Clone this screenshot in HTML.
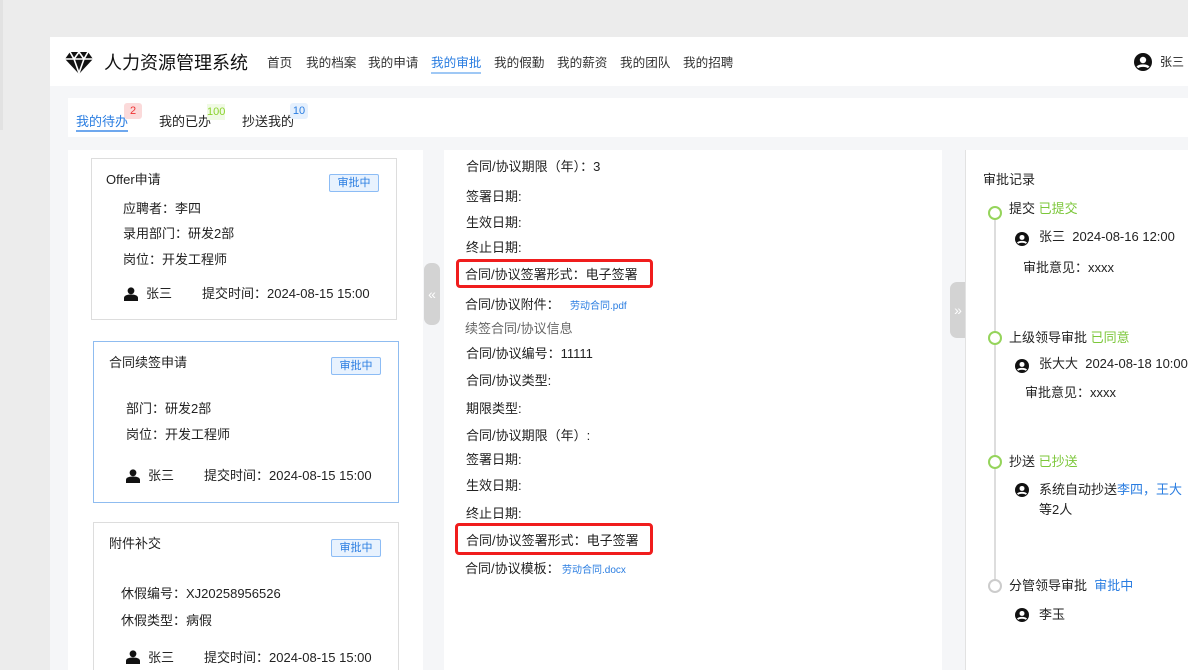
<!DOCTYPE html>
<html style="overflow:hidden;height:670px"><head><meta charset="utf-8"><style>
*{margin:0;padding:0;box-sizing:border-box}
body{width:1188px;height:670px;overflow:hidden;background:#ececec;font-family:"Liberation Sans","Noto Sans CJK SC",sans-serif;font-size:13px;line-height:16px;color:#222;position:relative}
.a{position:absolute;white-space:nowrap}
.hdr{left:50px;top:37px;width:1138px;height:49px;background:#fff}
.body{left:50px;top:86px;width:1138px;height:584px;background:#f5f6f8}
.nav{top:55px;font-size:12.6px;color:#333}
.panel{background:#fff}
.card{background:#fff;border:1px solid #ddd}
.tag{width:50px;height:18px;border:1px solid #8cbcf5;background:#e8f2fe;color:#2a7de1;font-size:11px;text-align:center;line-height:16px;border-radius:2px}
.blue{color:#2a7de1}
.green{color:#7cc73a}
.red{border:3px solid #f01d1d;border-radius:4px}
.handle{background:#d3d3d3;border-radius:7px;color:#fff;font-size:14px;text-align:center}
.dot{width:14px;height:14px;border:2px solid #95d45b;border-radius:50%;background:#fff}
</style></head><body>
<div class="a" style="left:0;top:0;width:3px;height:130px;background:#e2e2e2"></div>
<div class="a hdr"></div>
<div class="a body"></div>
<svg class="a" style="left:65px;top:52px" width="28" height="22" viewBox="0 0 28 22"><path d="M5 0h18l5 7-14 15L0 7z" fill="#111"/><path d="M0 7h28M9 7l5 14 5-14M5 0l4 7 5-7 5 7 4-7" stroke="#fff" stroke-width="1.6" fill="none"/></svg>
<div class="a" style="left:104px;top:52px;font-size:18px;line-height:22px;color:#111">人力资源管理系统</div>
<div class="a nav" style="left:267px">首页</div>
<div class="a nav" style="left:306px">我的档案</div>
<div class="a nav" style="left:368px">我的申请</div>
<div class="a nav blue" style="left:431px;border-bottom:2px solid #9fc8f5;padding-bottom:1px;color:#2a7de1">我的审批</div>
<div class="a nav" style="left:494px">我的假勤</div>
<div class="a nav" style="left:557px">我的薪资</div>
<div class="a nav" style="left:620px">我的团队</div>
<div class="a nav" style="left:683px">我的招聘</div>
<svg class="a" style="left:1134px;top:53px" width="18" height="18" viewBox="0 0 18 18"><circle cx="9" cy="9" r="9" fill="#111"/><circle cx="9" cy="7" r="3.2" fill="#fff"/><path d="M3.5 14.5c1.5-2.5 9.5-2.5 11 0" stroke="#fff" stroke-width="2.4" fill="none"/></svg>
<div class="a" style="left:1160px;top:54px;font-size:12px">张三</div>

<div class="a panel" style="left:68px;top:98px;width:1120px;height:39px"></div>
<div class="a blue" style="left:76px;top:114px;border-bottom:2px solid #6fa8ee;color:#2a7de1">我的待办</div>
<div class="a" style="left:124px;top:103px;width:18px;height:16px;background:#fbdada;color:#e33;font-size:11px;text-align:center;line-height:16px;border-radius:3px">2</div>
<div class="a" style="left:159px;top:114px">我的已办</div>
<div class="a" style="left:207px;top:104px;font-size:11px;color:#8bd22d;background:#f0fae4">100</div>
<div class="a" style="left:242px;top:114px">抄送我的</div>
<div class="a" style="left:290px;top:103px;width:18px;height:16px;background:#e5f0fd;color:#2a7de1;font-size:11px;text-align:center;line-height:16px;border-radius:3px">10</div>

<div class="a panel" style="left:68px;top:150px;width:355px;height:520px"></div>
<div class="a card" style="left:91px;top:158px;width:306px;height:162px"></div>
<div class="a" style="left:106px;top:172px">Offer申请</div>
<div class="a tag" style="left:329px;top:174px">审批中</div>
<div class="a" style="left:123px;top:201px">应聘者：李四</div>
<div class="a" style="left:123px;top:226px">录用部门：研发2部</div>
<div class="a" style="left:123px;top:252px">岗位：开发工程师</div>
<svg class="a" style="left:124px;top:287px" width="14" height="14" viewBox="0 0 14 14"><circle cx="7" cy="3.8" r="3.4" fill="#111"/><path d="M0 14v-3c0-2 2-3.5 7-3.5s7 1.5 7 3.5v3z" fill="#111"/></svg>
<div class="a" style="left:146px;top:286px">张三</div>
<div class="a" style="left:202px;top:286px">提交时间：2024-08-15 15:00</div>

<div class="a card" style="left:93px;top:341px;width:306px;height:162px;border-color:#8fbcf0"></div>
<div class="a" style="left:109px;top:355px">合同续签申请</div>
<div class="a tag" style="left:331px;top:357px">审批中</div>
<div class="a" style="left:126px;top:401px">部门：研发2部</div>
<div class="a" style="left:126px;top:427px">岗位：开发工程师</div>
<svg class="a" style="left:126px;top:469px" width="14" height="14" viewBox="0 0 14 14"><circle cx="7" cy="3.8" r="3.4" fill="#111"/><path d="M0 14v-3c0-2 2-3.5 7-3.5s7 1.5 7 3.5v3z" fill="#111"/></svg>
<div class="a" style="left:148px;top:468px">张三</div>
<div class="a" style="left:204px;top:468px">提交时间：2024-08-15 15:00</div>

<div class="a card" style="left:93px;top:522px;width:306px;height:160px"></div>
<div class="a" style="left:109px;top:536px">附件补交</div>
<div class="a tag" style="left:331px;top:539px">审批中</div>
<div class="a" style="left:121px;top:586px">休假编号：XJ20258956526</div>
<div class="a" style="left:121px;top:613px">休假类型：病假</div>
<svg class="a" style="left:126px;top:650px" width="14" height="14" viewBox="0 0 14 14"><circle cx="7" cy="3.8" r="3.4" fill="#111"/><path d="M0 14v-3c0-2 2-3.5 7-3.5s7 1.5 7 3.5v3z" fill="#111"/></svg>
<div class="a" style="left:148px;top:650px">张三</div>
<div class="a" style="left:204px;top:650px">提交时间：2024-08-15 15:00</div>

<div class="a handle" style="left:424px;top:263px;width:16px;height:62px;line-height:62px">«</div>

<div class="a panel" style="left:444px;top:150px;width:498px;height:520px"></div>
<div class="a" style="left:466px;top:159px">合同/协议期限（年）：3</div>
<div class="a" style="left:466px;top:189px">签署日期:</div>
<div class="a" style="left:466px;top:215px">生效日期:</div>
<div class="a" style="left:466px;top:240px">终止日期:</div>
<div class="a red" style="left:456px;top:259px;width:197px;height:29px"></div>
<div class="a" style="left:465px;top:267px">合同/协议签署形式：电子签署</div>
<div class="a" style="left:465px;top:297px">合同/协议附件：</div>
<div class="a blue" style="left:570px;top:299px;font-size:10px">劳动合同.pdf</div>
<div class="a" style="left:465px;top:321px;color:#666">续签合同/协议信息</div>
<div class="a" style="left:466px;top:346px">合同/协议编号：11111</div>
<div class="a" style="left:466px;top:373px">合同/协议类型:</div>
<div class="a" style="left:466px;top:401px">期限类型:</div>
<div class="a" style="left:466px;top:428px">合同/协议期限（年）:</div>
<div class="a" style="left:466px;top:452px">签署日期:</div>
<div class="a" style="left:466px;top:478px">生效日期:</div>
<div class="a" style="left:466px;top:506px">终止日期:</div>
<div class="a red" style="left:455px;top:523px;width:198px;height:32px"></div>
<div class="a" style="left:466px;top:533px">合同/协议签署形式：电子签署</div>
<div class="a" style="left:465px;top:561px">合同/协议模板：</div>
<div class="a blue" style="left:562px;top:563px;font-size:10px">劳动合同.docx</div>

<div class="a handle" style="left:950px;top:282px;width:16px;height:56px;line-height:56px;border-radius:7px 0 0 7px">»</div>

<div class="a panel" style="left:965px;top:150px;width:223px;height:520px;border-left:1px solid #e2e2e2"></div>
<div class="a" style="left:983px;top:172px">审批记录</div>
<div class="a" style="left:994px;top:218px;width:2px;height:368px;background:#ddd"></div>
<div class="a dot" style="left:988px;top:206px"></div>
<div class="a" style="left:1009px;top:201px">提交 <span class="green">已提交</span></div>
<svg class="a" style="left:1015px;top:232px" width="14" height="14" viewBox="0 0 18 18"><circle cx="9" cy="9" r="9" fill="#111"/><circle cx="9" cy="7" r="3.2" fill="#fff"/><path d="M3.5 14.5c1.5-2.5 9.5-2.5 11 0" stroke="#fff" stroke-width="2.4" fill="none"/></svg>
<div class="a" style="left:1039px;top:229px">张三&nbsp; 2024-08-16 12:00</div>
<div class="a" style="left:1023px;top:260px">审批意见：xxxx</div>
<div class="a dot" style="left:988px;top:331px"></div>
<div class="a" style="left:1009px;top:330px">上级领导审批 <span class="green">已同意</span></div>
<svg class="a" style="left:1015px;top:359px" width="14" height="14" viewBox="0 0 18 18"><circle cx="9" cy="9" r="9" fill="#111"/><circle cx="9" cy="7" r="3.2" fill="#fff"/><path d="M3.5 14.5c1.5-2.5 9.5-2.5 11 0" stroke="#fff" stroke-width="2.4" fill="none"/></svg>
<div class="a" style="left:1039px;top:356px">张大大&nbsp; 2024-08-18 10:00</div>
<div class="a" style="left:1025px;top:385px">审批意见：xxxx</div>
<div class="a dot" style="left:988px;top:455px"></div>
<div class="a" style="left:1009px;top:454px">抄送 <span class="green">已抄送</span></div>
<svg class="a" style="left:1015px;top:483px" width="14" height="14" viewBox="0 0 18 18"><circle cx="9" cy="9" r="9" fill="#111"/><circle cx="9" cy="7" r="3.2" fill="#fff"/><path d="M3.5 14.5c1.5-2.5 9.5-2.5 11 0" stroke="#fff" stroke-width="2.4" fill="none"/></svg>
<div class="a" style="left:1039px;top:482px">系统自动抄送<span class="blue">李四，王大</span></div>
<div class="a" style="left:1039px;top:502px">等2人</div>
<div class="a dot" style="left:988px;top:579px;border-color:#ccc"></div>
<div class="a" style="left:1009px;top:578px">分管领导审批&nbsp; <span class="blue">审批中</span></div>
<svg class="a" style="left:1015px;top:608px" width="14" height="14" viewBox="0 0 18 18"><circle cx="9" cy="9" r="9" fill="#111"/><circle cx="9" cy="7" r="3.2" fill="#fff"/><path d="M3.5 14.5c1.5-2.5 9.5-2.5 11 0" stroke="#fff" stroke-width="2.4" fill="none"/></svg>
<div class="a" style="left:1039px;top:607px">李玉</div>
</body></html>
